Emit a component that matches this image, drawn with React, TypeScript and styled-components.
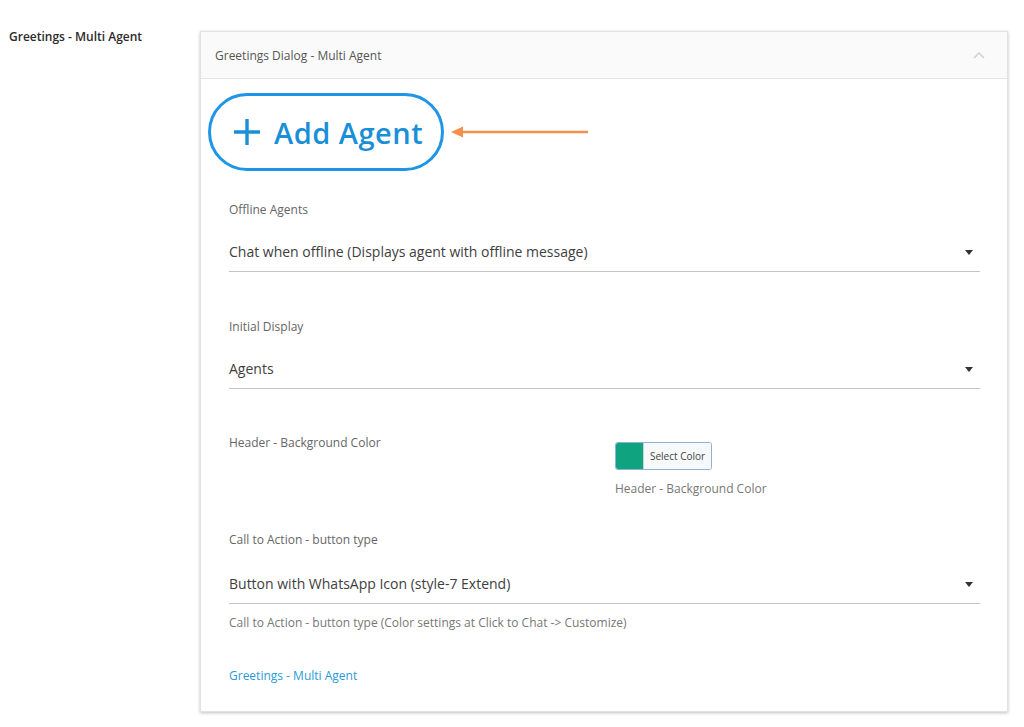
import React from 'react';
import styled, { createGlobalStyle } from 'styled-components';

const GlobalStyle = createGlobalStyle`
	body {
		margin: 0;
		background: #fff;
		font-family: 'Open Sans', 'Noto Sans', sans-serif;
	}
`;

const Page = styled.div`
	display: flex;
	align-items: flex-start;
	padding: 31px 16px 14px 9px;
	width: 1024px;
	box-sizing: border-box;
`;

const SideLabel = styled.div`
	width: 191px;
	flex-shrink: 0;
	font-size: 12px;
	font-weight: 600;
	color: #2b2b2b;
	margin-top: -3px;
`;

const Card = styled.div`
	flex: 1;
	background: #fff;
	border: 1px solid #e2e2e2;
	box-shadow: 0 1px 3px rgba(0, 0, 0, 0.25);
`;

const CardHeader = styled.div`
	display: flex;
	align-items: center;
	justify-content: space-between;
	height: 46px;
	padding: 0 22px 0 14px;
	background: #fafafa;
	border-bottom: 1px solid #e4e4e4;
	font-size: 12px;
	color: #555;
`;

const CardBody = styled.div`
	padding: 14px 27px 27px 28px;
`;

const AddRow = styled.div`
	display: flex;
	align-items: center;
	margin-left: -21px;
	gap: 6px;
`;

const AddButton = styled.button`
	display: flex;
	align-items: center;
	gap: 13px;
	height: 78px;
	padding: 0 18px 0 22px;
	border: 3px solid #1e95e6;
	border-radius: 40px;
	background: #fff;
	color: #1a8fd8;
	font-family: 'Open Sans', 'Noto Sans', sans-serif;
	font-size: 29px;
	letter-spacing: 0.5px;
	font-weight: 600;
	cursor: pointer;
`;

const Field = styled.div<{ $gap?: number }>`
	margin-top: ${p => p.$gap ?? 0}px;
`;

const Label = styled.div`
	font-size: 12px;
	color: #666;
	line-height: 16px;
`;

const Select = styled.div<{ $top?: number }>`
	display: flex;
	align-items: center;
	justify-content: space-between;
	margin-top: ${p => p.$top ?? 25}px;
	padding: 0 0 10px;
	border-bottom: 1px solid #c4c4c4;
	font-size: 14px;
	color: #3e3e3e;
	line-height: 18px;
`;

const Caret = styled.span`
	width: 0;
	height: 0;
	border-left: 4px solid transparent;
	border-right: 4px solid transparent;
	border-top: 5px solid #333;
	margin-right: 7px;
`;

const Help = styled.div<{ $gap?: number }>`
	margin-top: ${p => p.$gap ?? 10}px;
	font-size: 12px;
	color: #777;
`;

const TwoCols = styled.div`
	display: grid;
	grid-template-columns: 366px 1fr;
	gap: 20px;
	margin-top: 46px;
`;

const ColorPick = styled.div`
	display: inline-flex;
	align-items: stretch;
	height: 26px;
	border: 1px solid #8ab3d6;
	border-radius: 3px;
	overflow: hidden;
	margin-top: 7px;
`;

const Swatch = styled.span<{ $color: string }>`
	width: 27px;
	background: ${p => p.$color};
`;

const SwatchText = styled.span`
	display: flex;
	align-items: center;
	padding: 0 6px;
	background: #f6f8fa;
	font-size: 10px;
	color: #444;
	border-left: 1px solid #d0d0d0;
`;

const Link = styled.a`
	display: block;
	margin-top: 36px;
	font-size: 12px;
	color: #2a9bd8;
	text-decoration: none;
`;

const Chevron = () => (
	<svg width="12" height="8" viewBox="0 0 12 8" fill="none">
		<path d="M1 7l5-5 5 5" stroke="#cfcfcf" strokeWidth="1.5" />
	</svg>
);

const Arrow = () => (
	<svg width="140" height="14" viewBox="0 0 140 14">
		<path d="M12 7H138" stroke="#f5904c" strokeWidth="2.5" />
		<path d="M1 7L13 1.5V12.5Z" fill="#f5904c" />
	</svg>
);

export default function App() {
	return (
		<>
			<GlobalStyle />
			<Page>
				<SideLabel>Greetings - Multi Agent</SideLabel>
				<Card>
					<CardHeader>
						<span>Greetings Dialog - Multi Agent</span>
						<Chevron />
					</CardHeader>
					<CardBody>
						<AddRow>
							<AddButton>
								<svg width="28" height="28" viewBox="0 0 28 28">
									<path d="M14 1V27M1 14H27" stroke="#1a8fd8" strokeWidth="3.4" />
								</svg>
								Add Agent
							</AddButton>
							<Arrow />
						</AddRow>

						<Field $gap={31}>
							<Label>Offline Agents</Label>
							<Select>
								<span>Chat when offline (Displays agent with offline message)</span>
								<Caret />
							</Select>
						</Field>

						<Field $gap={47}>
							<Label>Initial Display</Label>
							<Select>
								<span>Agents</span>
								<Caret />
							</Select>
						</Field>

						<TwoCols>
							<Label>Header - Background Color</Label>
							<div>
								<ColorPick>
									<Swatch $color="#0fa37f" />
									<SwatchText>Select Color</SwatchText>
								</ColorPick>
								<Help $gap={6}>Header - Background Color</Help>
							</div>
						</TwoCols>

						<Field $gap={35}>
							<Label>Call to Action - button type</Label>
							<Select $top={27}>
								<span>Button with WhatsApp Icon (style-7 Extend)</span>
								<Caret />
							</Select>
							<Help>Call to Action - button type (Color settings at Click to Chat -&gt; Customize)</Help>
						</Field>

						<Link href="#">Greetings - Multi Agent</Link>
					</CardBody>
				</Card>
			</Page>
		</>
	);
}
